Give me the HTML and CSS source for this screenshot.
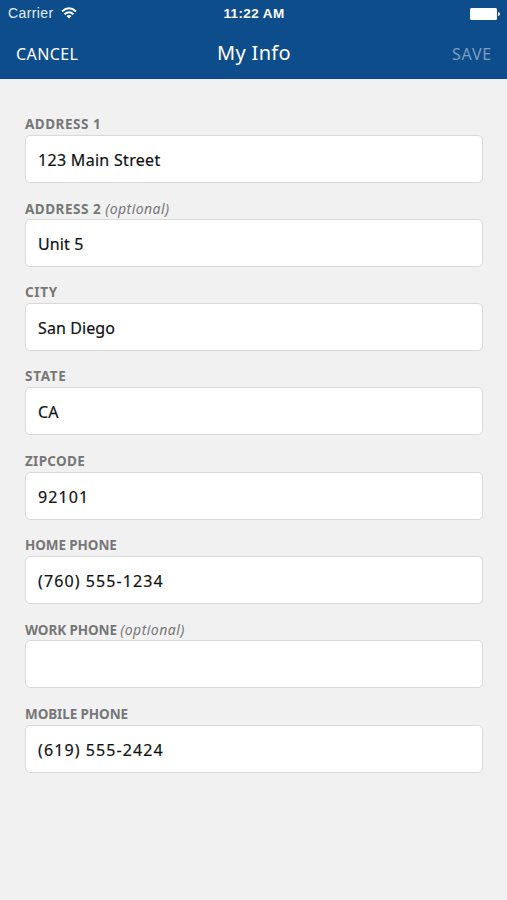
FILE: index.html
```html
<!DOCTYPE html>
<html lang="en">
<head>
<meta charset="utf-8">
<title>My Info</title>
<link rel="stylesheet" href="styles.css">
</head>
<body>
<header class="header">
  <div class="status">
    <div class="carrier"><span>Carrier</span>
      <svg class="wifi" viewBox="0 0 16 12" width="16" height="12"><g fill="none" stroke="#fff" stroke-width="1.9"><path d="M1 4.5Q8-1.8 15 4.5"/><path d="M3.500 7.2Q8 3.2 12.500 7.2"/></g><path d="M5.500 9Q8 6.900 10.500 9L8 11.500Z" fill="#fff"/></svg>
    </div>
    <time class="clock">11:22 AM</time>
    <svg class="battery" viewBox="0 0 30 12" width="30" height="12"><rect width="27" height="12" rx="1.500" fill="#fff"/><path d="M28 4Q30 4.500 30 6T28 8Z" fill="#fff"/></svg>
  </div>
  <nav class="nav">
    <span class="cancel">CANCEL</span>
    <h1 class="title">My Info</h1>
    <span class="save">SAVE</span>
  </nav>
</header>
<main class="form">
  <section class="field"><div class="label wide"><b>ADDRESS 1</b></div><div class="value street">123 Main Street</div></section>
  <section class="field"><div class="label wide"><b>ADDRESS 2</b> <i>(optional)</i></div><div class="value">Unit 5</div></section>
  <section class="field"><div class="label wider"><b>CITY</b></div><div class="value">San Diego</div></section>
  <section class="field"><div class="label wider"><b>STATE</b></div><div class="value">CA</div></section>
  <section class="field"><div class="label medium"><b>ZIPCODE</b></div><div class="value digits">92101</div></section>
  <section class="field"><div class="label"><b>HOME PHONE</b></div><div class="value digits">(760) 555-1234</div></section>
  <section class="field"><div class="label"><b>WORK PHONE</b> <i>(optional)</i></div><div class="value"></div></section>
  <section class="field"><div class="label"><b>MOBILE PHONE</b></div><div class="value digits">(619) 555-2424</div></section>
</main>
</body>
</html>
```
FILE: styles.css
```css
* { box-sizing: border-box; }
body { margin: 0; min-height: 900px; background: #f1f1f1; font-family: "Noto Sans", sans-serif; }
.header { height: 79px; background: #0e4d8b; color: #fff; border-bottom: 1px solid #0b4682; }
.status { display: grid; grid-template-columns: 1fr auto 1fr; align-items: center; height: 27px; padding: 0 7px 0 8px; font: 14px/27px "Liberation Sans", sans-serif; }
.carrier { display: flex; align-items: center; gap: 7px; color: #e3edf7; letter-spacing: 0.4px; }
.wifi { margin-top: -2px; }
.clock { font-weight: bold; font-size: 13.500px; letter-spacing: 0.4px; }
.battery { justify-self: end; }
.nav { display: grid; grid-template-columns: 1fr auto 1fr; align-items: center; height: 54px; padding: 0 15px 0 16px; font-size: 16px; }
.title { margin: -4px 0 0; font-size: 20px; font-weight: 400; letter-spacing: 0.3px; }
.cancel { letter-spacing: 0.4px; }
.save { justify-self: end; color: #7c9fc4; letter-spacing: 0.8px; }
.form { padding: 35.500px 24.500px 0 25px; }
.field { height: 84.300px; }
.label { height: 20px; font-size: 13.500px; line-height: 19px; color: #777; white-space: nowrap; letter-spacing: -0.1px; }
.label i { font-size: 14px; letter-spacing: 0.45px; }
.label.medium { letter-spacing: 0.3px; }
.label.wide { letter-spacing: 0.5px; }
.label.wider { letter-spacing: 0.7px; }
.value { height: 48px; padding-left: 12px; border: 1px solid #d9d9d9; border-radius: 5px; background: #fff; color: #111; font-size: 16px; line-height: 48px; letter-spacing: 0.1px; -webkit-text-stroke: 0.2px #111; }
.value.street { letter-spacing: 0.3px; }
.value.digits { letter-spacing: 1.1px; }
```
